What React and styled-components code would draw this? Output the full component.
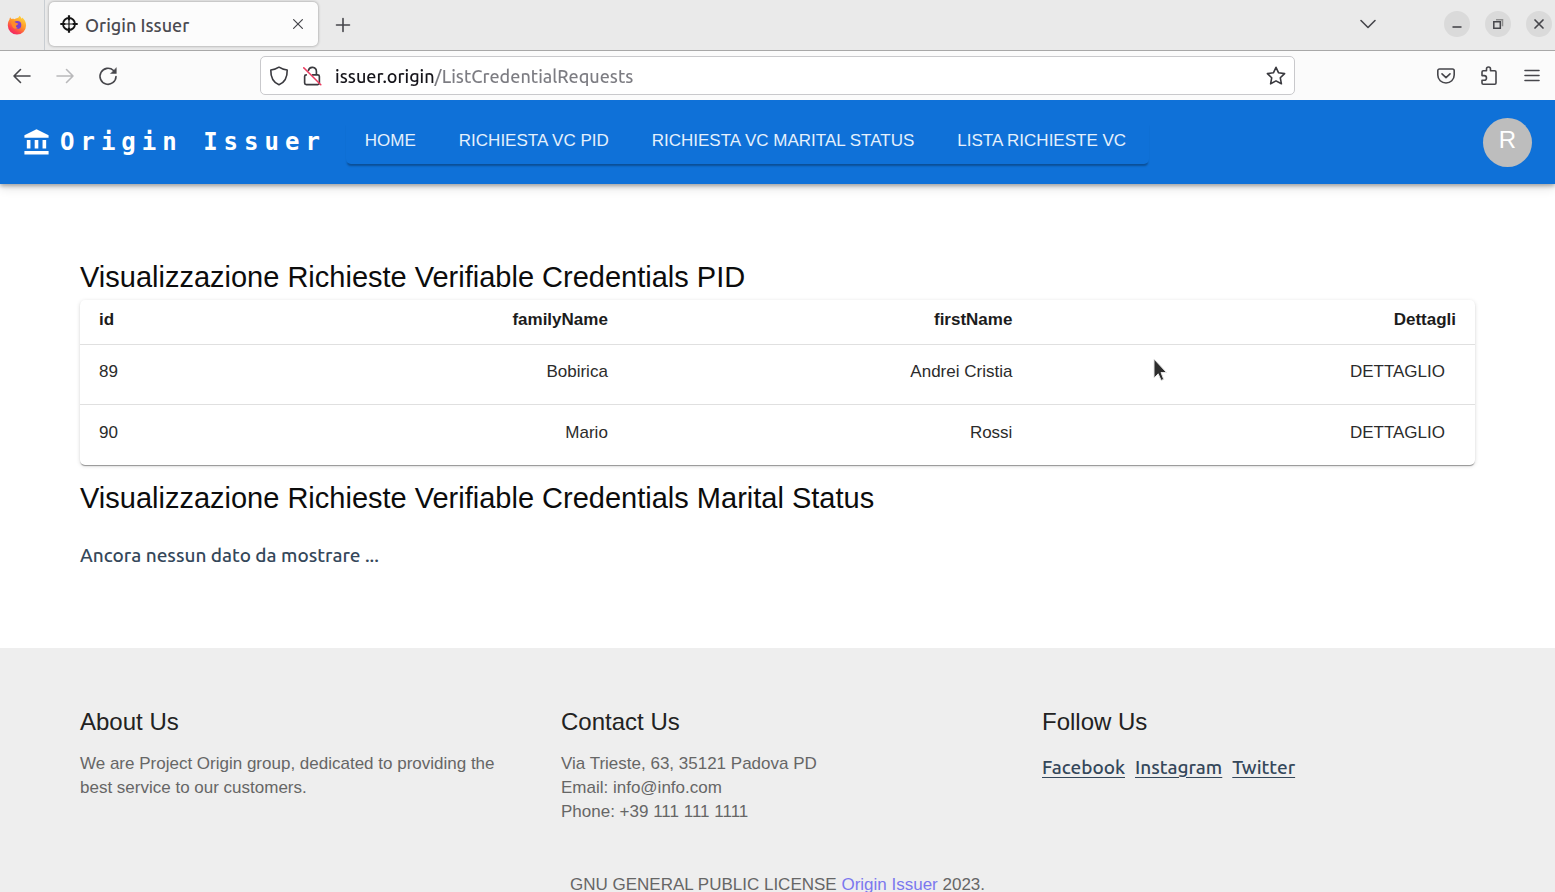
import React from "react";
import styled, { createGlobalStyle } from "styled-components";

const SANS = `"Liberation Sans", Arial, sans-serif`;
const UI = `Ubuntu, "Noto Sans", sans-serif`;

const GlobalStyle = createGlobalStyle`
  *, *::before, *::after { box-sizing: border-box; }
  body { margin: 0; background: #fff; font-family: ${SANS}; }
  h1, h2, p { margin: 0; font-weight: 400; }
  button { border: 0; padding: 0; background: none; font: inherit; color: inherit; cursor: pointer; }
`;

const Window = styled.div`
  position: relative;
  display: flex;
  flex-direction: column;
  height: 100vh;
  overflow: hidden;
`;

/* ---------- browser chrome ---------- */

const TabStrip = styled.div`
  display: flex;
  align-items: center;
  flex: none;
  height: 51px;
  padding-right: 3px;
  background: #eaeaea;
  border-bottom: 1px solid #a8a8a8;
`;

const PinnedTab = styled.button`
  display: flex;
  align-items: center;
  align-self: stretch;
  width: 45px;
  padding-left: 7px;
  border-right: 1px solid #c8cdd2;
`;

const Tab = styled.div`
  display: flex;
  align-items: center;
  gap: 7px;
  width: 269px;
  height: 44px;
  margin: 0 12px 2px 4px;
  padding: 0 12px 0 11px;
  border-radius: 5px;
  background: #fcfcfc;
  box-shadow: 0 0 3px rgba(0, 0, 0, 0.4);
  font: 500 18px/24px ${UI};
  color: #4a4a50;
`;

const TabTitle = styled.span`
  flex: 1;
  padding-top: 2px;
`;

const IconButton = styled.button`
  display: flex;
  align-items: center;
  justify-content: center;
  flex: none;
  width: ${(p) => p.$size || 43}px;
  height: ${(p) => p.$size || 43}px;
  color: ${(p) => (p.$muted ? "#b9b9bb" : "#46464b")};
`;

const WindowControls = styled.div`
  display: flex;
  align-items: center;
  gap: 15px;
  margin-left: auto;
  padding-bottom: 2px;
`;

const ControlButton = styled(IconButton)`
  width: 26px;
  height: 26px;
  border-radius: 50%;
  background: #dadada;
`;

const ListTabs = styled(IconButton)`
  width: 26px;
  height: 26px;
  margin-right: 48px;
`;

const NavBar = styled.div`
  display: grid;
  grid-template-columns: 1fr minmax(0, 1035px) 1fr;
  align-items: center;
  flex: none;
  height: 49px;
  background: #fbfbfb;
`;

const NavGroup = styled.div`
  display: flex;
  justify-content: ${(p) => (p.$end ? "flex-end" : "flex-start")};
  padding-right: ${(p) => (p.$end ? 2 : 0)}px;
`;

const AddressBox = styled.div`
  display: flex;
  align-items: center;
  height: 39px;
  padding: 0 8px;
  gap: 12px;
  border: 1px solid #c9c9cc;
  border-radius: 5px;
  background: #fff;
  color: #3a3a3f;
`;

const AddressInput = styled.input`
  flex: 1;
  min-width: 0;
  padding: 0;
  border: 0;
  outline: 0;
  font: 500 18px/24px ${UI};
  color: #15141a;
  background: linear-gradient(to right, #15141a 99px, #7c7c82 99px);
  -webkit-background-clip: text;
  background-clip: text;
  -webkit-text-fill-color: transparent;
`;

/* ---------- site ---------- */

const Viewport = styled.div`
  flex: 1;
  min-height: 0;
  overflow-y: auto;
  scrollbar-width: none;
`;

const AppBar = styled.header`
  position: relative;
  display: flex;
  align-items: center;
  height: 84px;
  padding: 0 23px 0 22px;
  background: #0f71d8;
  color: #fff;
  box-shadow: 0 2px 4px rgba(0, 0, 0, 0.3), 0 4px 10px rgba(0, 0, 0, 0.12);
`;

const Brand = styled.a`
  display: flex;
  align-items: center;
  gap: 9px;
  margin-right: 20px;
  color: inherit;
  text-decoration: none;
  font: 700 24px/36px "DejaVu Sans Mono", monospace;
  letter-spacing: 6px;
`;

const Menu = styled.nav`
  display: flex;
  gap: 1px;
  border-radius: 5px;
  box-shadow: 0 3px 2px -1px rgba(0, 0, 0, 0.3);
`;

const MenuButton = styled.button`
  height: 44px;
  padding: 0 23px 3px 19px;
  font-size: 17px;
  line-height: 24px;
  color: #e4f0fc;
`;

const Avatar = styled.button`
  width: 49px;
  height: 49px;
  margin-left: auto;
  padding-bottom: 4px;
  border-radius: 50%;
  background: #bdbdbd;
  font-size: 24px;
  line-height: 24px;
  color: #fff;
`;

const Main = styled.main`
  padding: 74px 80px 80px;
`;

const Heading = styled.h1`
  font-size: 29px;
  line-height: 39px;
  color: #0c0c0c;
`;

const Card = styled.div`
  margin: 3px 0 14px;
  border-radius: 5px;
  background: #fff;
  box-shadow: 0 2px 1px -1px rgba(0, 0, 0, 0.25), 0 1px 1px rgba(0, 0, 0, 0.16), 0 1px 4px rgba(0, 0, 0, 0.14);
`;

const Table = styled.table`
  width: 100%;
  table-layout: fixed;
  border-collapse: separate;
  border-spacing: 0;
  font-size: 17px;
  line-height: 24px;
  color: #2b2b2b;

  th, td {
    text-align: right;
    border-bottom: 1px solid #e0e0e0;
  }
  th { height: 45px; padding: 0 19px 4px; color: #1c1c1c; }
  td { height: 60px; padding: 0 19px 5px; }
  th:first-child, td:first-child { text-align: left; }
  tbody tr:last-child td { border-bottom: 0; }
`;

const Col = styled.col`
  width: ${(p) => p.$width};
`;

const DetailButton = styled.button`
  padding: 0 11px;
`;

const Empty = styled.p`
  margin-top: 24px;
  font: 500 19px/26px ${UI};
  color: #34475a;
`;

const Footer = styled.footer`
  padding: 58px 80px;
  background: #eee;
  color: #666;
  font-size: 17px;
  line-height: 24px;
`;

const FooterGrid = styled.div`
  display: grid;
  grid-template-columns: repeat(3, 1fr);
  gap: 48px;
`;

const FooterTitle = styled.h2`
  margin-bottom: 14px;
  font-size: 24px;
  line-height: 32px;
  color: #222;
`;

const Social = styled.div`
  display: flex;
  gap: 10px;
  font: 500 19px/30px ${UI};
`;

const SocialLink = styled.a`
  color: #34475a;
  text-underline-offset: 3px;
`;

const License = styled.p`
  margin-top: 49px;
  text-align: center;
`;

const LicenseLink = styled.a`
  color: #7b78ee;
  text-decoration: none;
`;

const Pointer = styled.svg`
  position: absolute;
  left: 1152px;
  top: 357px;
  pointer-events: none;
`;

/* ---------- icons ---------- */

const Icon = ({ size = 20, width = 1.6, children }) => (
  <svg width={size} height={size} viewBox="0 0 20 20" fill="none" stroke="currentColor"
    strokeWidth={width} strokeLinecap="round" strokeLinejoin="round" aria-hidden="true">
    {children}
  </svg>
);

const FirefoxIcon = () => (
  <svg width="20" height="20" viewBox="0 0 20 20" aria-hidden="true">
    <defs>
      <linearGradient id="flame" x1="0.85" y1="0.05" x2="0.25" y2="1">
        <stop offset="0" stopColor="#ffd93b" />
        <stop offset="0.45" stopColor="#ff9328" />
        <stop offset="0.8" stopColor="#fb3b52" />
        <stop offset="1" stopColor="#ee2565" />
      </linearGradient>
    </defs>
    <path fill="url(#flame)" d="M12.5.8c1.2 1 1.7 1.9 2 3 .5-.2.6-.7.6-1.2 2.300 1.700 4 4.600 4 7.900A9.200 9.200 0 0 1 10 19.600 9.200 9.200 0 0 1 .8 10.500C.8 8 1.400 6.200 2.500 4.600c0-.8.3-1.700.8-2.300.2.8.6 1.300 1.200 1.700 1.100-.3 2.200-.2 3.100.2C9 3.200 11.900 3.300 12.500.8z" />
    <circle cx="10.300" cy="10" r="4" fill="#7a3fd0" />
    <path fill="#ff8a2a" d="M3.300 7.600c2-1.300 4.300-1 5.600.2.700.6 2.300.4 2.500 1-.2 1-1.900 1.200-2.300 2-.5 1.100.5 2.300 2 2.300-1.800 1.300-4.400.8-5.500-1.100-.8-1.400-.8-3-2.300-4.400z" />
  </svg>
);

const TargetIcon = () => (
  <svg width="18" height="18" viewBox="0 0 18 18" fill="none" stroke="#151515" aria-hidden="true">
    <circle cx="9" cy="9" r="6" strokeWidth="1.800" />
    <path d="M9 .3v5M9 12.700v5M.3 9h5M12.700 9h5" strokeWidth="2.200" />
    <path d="M9 5v8M5 9h8" strokeWidth="1.200" />
  </svg>
);

const BankIcon = () => (
  <svg width="29" height="29" viewBox="0 0 24 24" fill="currentColor" aria-hidden="true">
    <path d="M4 10h3v7H4zM10.500 10h3v7h-3zM2 19h20v3H2zM17 10h3v7h-3zM12 1 2 6v2h20V6z" />
  </svg>
);

const MENU = ["HOME", "RICHIESTA VC PID", "RICHIESTA VC MARITAL STATUS", "LISTA RICHIESTE VC"];

const REQUESTS = [
  { id: 89, familyName: "Bobirica", firstName: "Andrei Cristia" },
  { id: 90, familyName: "Mario", firstName: "Rossi" },
];

const BrowserChrome = () => (
  <>
    <TabStrip>
      <PinnedTab aria-label="Firefox"><FirefoxIcon /></PinnedTab>
      <Tab>
        <TargetIcon />
        <TabTitle>Origin Issuer</TabTitle>
        <IconButton $size={16} aria-label="Close tab">
          <Icon size={16} width={1.500}><path d="M4.500 4.500l11 11M15.500 4.500l-11 11" /></Icon>
        </IconButton>
      </Tab>
      <IconButton $size={26} aria-label="New tab">
        <Icon size={20} width={1.600}><path d="M10 3.500v13M3.500 10h13" /></Icon>
      </IconButton>
      <WindowControls>
        <ListTabs aria-label="List all tabs">
          <Icon size={20} width={1.600}><path d="M3 6.500l7 7 7-7" /></Icon>
        </ListTabs>
        <ControlButton aria-label="Minimize">
          <Icon><path d="M5.500 13h9" strokeLinecap="butt" /></Icon>
        </ControlButton>
        <ControlButton aria-label="Restore">
          <Icon width={1.500}>
            <path d="M5.800 7.800h6.500v6.500H5.800z" strokeLinejoin="miter" />
            <path d="M8 5.700h6.500v6.500" stroke="#8d8d8d" strokeLinecap="butt" strokeLinejoin="miter" />
          </Icon>
        </ControlButton>
        <ControlButton aria-label="Close">
          <Icon width={1.700}><path d="M6 6l8 8M14 6l-8 8" /></Icon>
        </ControlButton>
      </WindowControls>
    </TabStrip>
    <NavBar>
      <NavGroup>
        <IconButton aria-label="Back"><Icon><path d="M18 10H2M8.500 3.500L2 10l6.500 6.500" /></Icon></IconButton>
        <IconButton $muted aria-label="Forward"><Icon><path d="M2 10h16M11.500 3.500L18 10l-6.500 6.500" /></Icon></IconButton>
        <IconButton aria-label="Reload">
          <Icon>
            <path d="M18 10.500A8 8 0 1 1 15.500 4.500" />
            <path d="M18.300 2v5.500h-5.500z" fill="currentColor" strokeWidth="0.500" />
          </Icon>
        </IconButton>
      </NavGroup>
      <AddressBox>
        <Icon width={1.600}>
          <path d="M10 1.200c2.500 1.700 5 2.600 8.200 2.800 .2 7-2.200 12.300-8.200 14.800C4 16.300 1.600 11 1.800 4 5 3.800 7.500 2.900 10 1.200z" />
        </Icon>
        <Icon size={22} width={1.500}>
          <path d="M4.800 9c-1 0-1.500.6-1.500 1.500v5.800c0 1 .6 1.500 1.500 1.500h10.400c1 0 1.500-.6 1.500-1.500v-5.800c0-1-.6-1.500-1.500-1.500H10.500M6.700 5A3.700 3.700 0 0 1 14 5.700V9" />
          <path d="M2.500 2.500l15.500 15.500" stroke="#ea3a5e" strokeWidth="1.400" />
        </Icon>
        <AddressInput type="text" aria-label="Address" defaultValue="issuer.origin/ListCredentialRequests" />
        <Icon width={1.600}>
          <path d="M10 1.300l2.600 5.500 6 .8-4.300 4.200 1.100 6-5.400-2.900-5.400 2.900 1.100-6L1.400 7.600l6-.8z" />
        </Icon>
      </AddressBox>
      <NavGroup $end>
        <IconButton aria-label="Save to Pocket">
          <Icon>
            <path d="M3.500 3h13c1 0 1.700.7 1.700 1.700V9c0 4.600-3.700 8-8.200 8s-8.200-3.400-8.200-8V4.700C1.800 3.700 2.500 3 3.500 3z" />
            <path d="M6 7.800l4 3.800 4-3.800" />
          </Icon>
        </IconButton>
        <IconButton aria-label="Extensions">
          <Icon>
            <path d="M3 8.500V6c0-.8.5-1.200 1.200-1.200h3.300V3a2 2 0 0 1 4 0v1.800h4.300c.8 0 1.200.5 1.200 1.200V17c0 .8-.5 1.200-1.200 1.200H4.200C3.500 18.200 3 17.800 3 17v-2.800h2.200a2.300 2.300 0 0 0 0-4.600H3z" />
          </Icon>
        </IconButton>
        <IconButton aria-label="Open menu"><Icon><path d="M3 4.500h14M3 9.500h14M3 14.500h14" /></Icon></IconButton>
      </NavGroup>
    </NavBar>
  </>
);

const RequestsTable = ({ rows }) => (
  <Card>
    <Table>
      <colgroup>
        <Col $width="10%" />
        <Col />
        <Col $width="29%" />
        <Col $width="31.8%" />
      </colgroup>
      <thead>
        <tr><th>id</th><th>familyName</th><th>firstName</th><th>Dettagli</th></tr>
      </thead>
      <tbody>
        {rows.map((r) => (
          <tr key={r.id}>
            <td>{r.id}</td>
            <td>{r.familyName}</td>
            <td>{r.firstName}</td>
            <td><DetailButton>DETTAGLIO</DetailButton></td>
          </tr>
        ))}
      </tbody>
    </Table>
  </Card>
);

export default function App() {
  return (
    <Window>
      <GlobalStyle />
      <BrowserChrome />
      <Viewport>
        <AppBar>
          <Brand href="#"><BankIcon />Origin Issuer</Brand>
          <Menu>{MENU.map((m) => <MenuButton key={m}>{m}</MenuButton>)}</Menu>
          <Avatar>R</Avatar>
        </AppBar>
        <Main>
          <Heading>Visualizzazione Richieste Verifiable Credentials PID</Heading>
          <RequestsTable rows={REQUESTS} />
          <Heading>Visualizzazione Richieste Verifiable Credentials Marital Status</Heading>
          <Empty>Ancora nessun dato da mostrare ...</Empty>
        </Main>
        <Footer>
          <FooterGrid>
            <div>
              <FooterTitle>About Us</FooterTitle>
              <p>We are Project Origin group, dedicated to providing the best service to our customers.</p>
            </div>
            <div>
              <FooterTitle>Contact Us</FooterTitle>
              <p>Via Trieste, 63, 35121 Padova PD</p>
              <p>Email: info@info.com</p>
              <p>Phone: +39 111 111 1111</p>
            </div>
            <div>
              <FooterTitle>Follow Us</FooterTitle>
              <Social>
                <SocialLink href="#">Facebook</SocialLink>
                <SocialLink href="#">Instagram</SocialLink>
                <SocialLink href="#">Twitter</SocialLink>
              </Social>
            </div>
          </FooterGrid>
          <License>GNU GENERAL PUBLIC LICENSE <LicenseLink href="#">Origin Issuer</LicenseLink> 2023.</License>
        </Footer>
      </Viewport>
      <Pointer width="16" height="26" viewBox="0 0 16 26" aria-hidden="true">
        <path d="M2 2v19l4.200-4.200 3 6.700 2.500-1.200-2.700-6.800H14.500z" fill="#2d2d2d" stroke="#e4e4e4" strokeWidth="1" />
      </Pointer>
    </Window>
  );
}
